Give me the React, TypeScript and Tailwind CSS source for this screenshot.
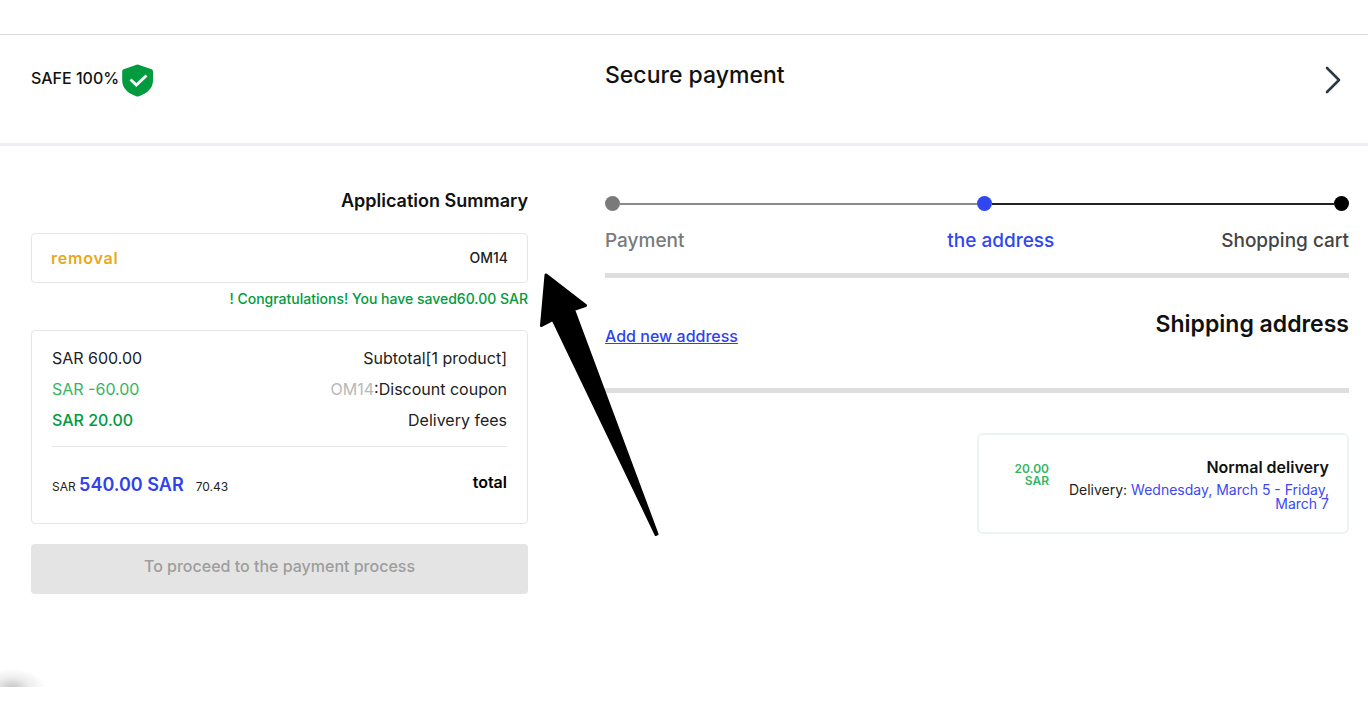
import { ChevronRight } from "lucide-react";

const steps = {
  payment: "Payment",
  address: "the address",
  cart: "Shopping cart",
};

function ShieldIcon() {
  return (
    <svg width="32" height="33" viewBox="0 0 32 33" fill="none" aria-hidden="true">
      <path
        d="M14.6 0.8a2.6 2.6 0 0 1 1.9 0L29.6 5.3A2.2 2.2 0 0 1 31 7.4V16.6c0 8-6.2 13-14 15.6a4 4 0 0 1-2.8 0C6.3 29.6 0.2 24.6 0.2 16.6V7.4A2.2 2.2 0 0 1 1.6 5.3Z"
        fill="#009b3e"
      />
      <path d="M8.500 15.500l5.800 5.600L24.500 11.500" stroke="white" strokeWidth="2.800" />
    </svg>
  );
}

function Header() {
  return (
    <header className="border-t border-[#d9d9d9] border-b-3 border-b-[#edf1f5] h-28 grid grid-cols-[497fr_744fr] gap-x-[77px] pl-[31px] pr-[19px]">
      <div className="flex items-center h-[90px]">
        <span className="text-base font-medium mb-1">SAFE 100%</span>
        <span className="ml-[3px]">
          <ShieldIcon />
        </span>
      </div>
      <div className="flex items-center justify-between h-[90px]">
        <h1 className="text-[23px] font-medium mb-2.5">Secure payment</h1>
        <button type="button" aria-label="Back to shopping cart" className="text-[#2b3a42] -mr-2">
          <ChevronRight size={48} strokeWidth={1.3} strokeLinecap="round" />
        </button>
      </div>
    </header>
  );
}

function Arrow() {
  return (
    <svg
      className="absolute left-full top-[82px] ml-2.5 pointer-events-none"
      width="122"
      height="268"
      viewBox="538 271 122 268"
      aria-hidden="true"
    >
      <path
        d="M546 275 585.5 305.5 573.5 309.5 657 534 656 534.5 553 319.5 541.5 325.5Z"
        fill="black"
        stroke="black"
        strokeWidth="3"
        strokeLinejoin="round"
      />
    </svg>
  );
}

function Summary() {
  return (
    <section className="relative">
      <h2 className="text-lg leading-6 font-semibold text-right">Application Summary</h2>

      <form className="mt-5 h-[50px] px-[19px] flex items-center justify-between border border-[#e4e6e8] rounded">
        <button type="button" className="text-base font-semibold tracking-wider text-[#e8a820]">
          removal
        </button>
        <input
          aria-label="Coupon code"
          defaultValue="OM14"
          className="w-32 text-sm font-medium text-right text-[#222] outline-none"
        />
      </form>
      <p className="mt-1.5 text-sm leading-5 font-medium text-right text-[#009b3e]">
        ! Congratulations! You have saved60.00 SAR
      </p>

      <div className="mt-[21px] border border-[#e4e6e8] rounded px-5 pt-3 pb-4">
        <dl className="text-base leading-[31px] text-[#222]">
          <div className="flex flex-row-reverse justify-between">
            <dt>Subtotal[1 product]</dt>
            <dd>SAR 600.00</dd>
          </div>
          <div className="flex flex-row-reverse justify-between">
            <dt>
              <span className="text-[#b8b8b8]">OM14</span>:Discount coupon
            </dt>
            <dd className="text-[#35b565]">SAR -60.00</dd>
          </div>
          <div className="flex flex-row-reverse justify-between">
            <dt>Delivery fees</dt>
            <dd className="font-medium text-[#009b3e]">SAR 20.00</dd>
          </div>
          <div className="flex flex-row-reverse justify-between mt-2.5 pt-5 border-t border-[#e4e6e8]">
            <dt className="font-semibold text-black">total</dt>
            <dd className="text-xs leading-10">
              SAR <span className="text-lg font-semibold text-[#2f42ee]">540.00 SAR</span>
              <span className="ml-3">70.43</span>
            </dd>
          </div>
        </dl>
      </div>

      <button
        type="button"
        disabled
        className="mt-5 w-full h-[50px] pb-1.5 rounded bg-[#e4e4e4] text-base font-medium text-[#9d9d9d]"
      >
        To proceed to the payment process
      </button>
      <Arrow />
    </section>
  );
}

function Steps() {
  return (
    <nav aria-label="Checkout steps" className="border-b-5 border-[#dedede] pb-5">
      <div className="flex items-center">
        <div className="w-1/2 flex items-center">
          <span className="size-[15px] rounded-full bg-[#7a7a7a]" />
          <span className="flex-1 h-0.5 bg-[#8a8a8a]" />
        </div>
        <div className="w-1/2 flex items-center">
          <span className="size-[15px] rounded-full bg-[#2f47f0]" />
          <span className="flex-1 h-0.5 bg-[#222]" />
          <span className="size-[15px] rounded-full bg-black" />
        </div>
      </div>
      <ol className="mt-4.5 flex text-[19px] leading-6 font-medium">
        <li className="w-[46%] text-[#7a7a7a]">{steps.payment}</li>
        <li className="text-[#2f47f0]" aria-current="step">{steps.address}</li>
        <li className="ml-auto text-[#444]">{steps.cart}</li>
      </ol>
    </nav>
  );
}

function Shipping() {
  return (
    <section>
      <div className="h-[115px] border-b-5 border-[#dedede] flex items-center justify-between">
        <a href="#new-address" className="text-base font-medium underline text-[#2f42ee] mt-1.5">
          Add new address
        </a>
        <h2 className="text-[23px] font-semibold mb-4.5">Shipping address</h2>
      </div>

      <div className="mt-10 ml-auto w-1/2 h-[101px] border-2 border-[#edf2f5] rounded-md pl-8 pr-[18px] pt-5 flex justify-between text-right">
        <p className="w-[38px] mt-2 text-xs leading-3 font-semibold text-[#35b565]">20.00 SAR</p>
        <div className="w-[264px]">
          <h3 className="text-base leading-6 font-semibold">Normal delivery</h3>
          <p className="mt-1 text-sm leading-3.5 text-[#222]">
            Delivery: <span className="text-[#3c48f5]">Wednesday, March 5 - Friday, March 7</span>
          </p>
        </div>
      </div>
    </section>
  );
}

export default function App() {
  return (
    <div className="min-h-screen bg-white text-[#111] font-['Inter','Liberation_Sans',sans-serif] pt-[34px]">
      <Header />
      <main className="grid grid-cols-[497fr_744fr] gap-x-[77px] pl-[31px] pr-[19px] pt-[43px]">
        <Summary />
        <div className="pt-[7px]">
          <Steps />
          <Shipping />
        </div>
      </main>
      {/* top edge of the floating button's shadow */}
      <div className="mt-[73px] h-5 w-12 bg-[radial-gradient(ellipse_34px_18px_at_12px_100%,#c8c8c8,#ececec_50%,transparent)]" />
    </div>
  );
}
